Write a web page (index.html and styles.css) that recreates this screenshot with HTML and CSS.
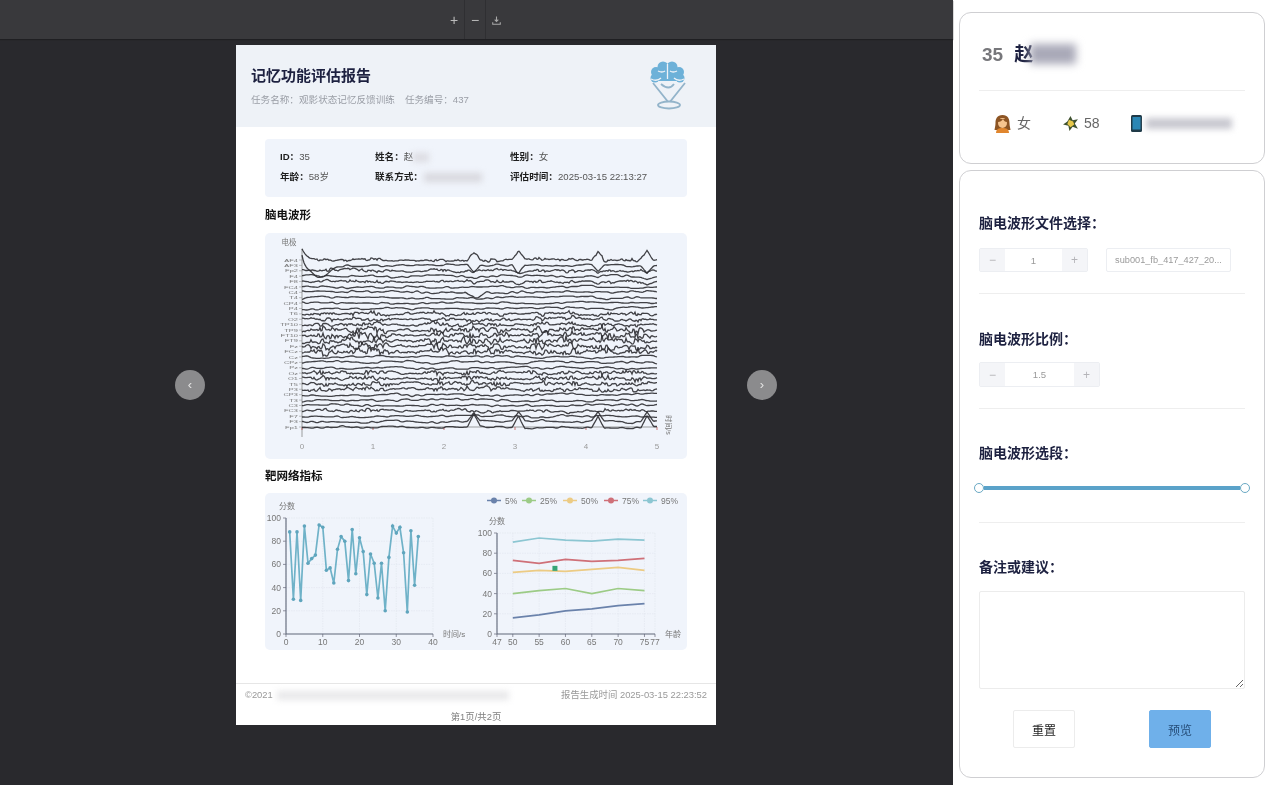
FILE: index.html
```html
<!DOCTYPE html>
<html lang="zh-CN">
<head>
    <meta charset="UTF-8">
    <title>记忆功能评估报告</title>
    <link rel="stylesheet" href="styles.css">
</head>
<body>
    <div class="viewer">
        <div class="toolbar">
            <button class="tool">+</button>
            <button class="tool">−</button>
            <button class="tool">
                <svg width="9" height="9" viewBox="0 0 10 10" fill="none" stroke="#a8a8a8" stroke-width="1.2"><path d="M5 .5v5.5M3 4l2 2 2-2M.8 7v2.2h8.4V7"/></svg>
            </button>
        </div>
        <div class="stage">
            <button class="nav-btn">‹</button>
            <div class="sheet">
                <div class="sheet-header">
                    <div>
                        <h1>记忆功能评估报告</h1>
                        <p class="task-line"><span>任务名称：观影状态记忆反馈训练</span><span>任务编号：437</span></p>
                    </div>
                    <svg class="logo" width="40" height="50" viewBox="0 0 40 50">
                        <path d="M3 23L19 43 35 23" fill="none" stroke="#93b4ca" stroke-width="1.800"/>
                        <ellipse cx="19" cy="45" rx="11" ry="3.500" fill="#eef2f7" stroke="#93b4ca" stroke-width="1.800"/>
                        <path d="M11 24q8 7 13 0" fill="none" stroke="#93b4ca" stroke-width="1.800"/>
                        <circle cx="13" cy="7" r="5.500" fill="#6db1d8"/>
                        <circle cx="22" cy="7" r="5.500" fill="#6db1d8"/>
                        <circle cx="6" cy="12" r="5" fill="#6db1d8"/>
                        <circle cx="29" cy="12" r="5" fill="#6db1d8"/>
                        <circle cx="5" cy="18" r="4.500" fill="#6db1d8"/>
                        <circle cx="30" cy="18" r="4.500" fill="#6db1d8"/>
                        <rect x="8" y="6" width="19" height="15" fill="#6db1d8"/>
                        <path d="M1 19q6 3 10-1M34 19q-6 3-10-1M17.500 4v15M8 11q4 2 7 0M27 11q-4 2-7 0" fill="none" stroke="#eef2f7" stroke-width="1.300"/>
                    </svg>
                </div>
                <div class="sheet-body">
                    <div class="info-box">
                        <div><b>ID：</b>35</div>
                        <div><b>姓名：</b>赵<i class="mask mask-name"></i></div>
                        <div><b>性别：</b>女</div>
                        <div><b>年龄：</b>58岁</div>
                        <div><b>联系方式：</b><i class="mask mask-phone"></i></div>
                        <div><b>评估时间：</b>2025-03-15 22:13:27</div>
                    </div>
                    <h2>脑电波形</h2>
                    <div class="panel panel-wave" id="wave"></div>
                    <h2>靶网络指标</h2>
                    <div class="panel panel-charts">
                        <div id="chart-time"></div>
                        <div id="chart-age"></div>
                    </div>
                </div>
                <div class="sheet-footer">
                    <div class="footer-row">
                        <span>©2021<i class="mask mask-copy"></i></span>
                        <span>报告生成时间 2025-03-15 22:23:52</span>
                    </div>
                    <div class="page-no">第1页/共2页</div>
                </div>
            </div>
            <button class="nav-btn">›</button>
        </div>
    </div>

    <div class="sidebar">
        <div class="card card-user">
            <div class="user-name"><span class="user-id">35</span>赵<i class="mask mask-user"></i></div>
            <div class="user-meta">
                <span class="meta-item">
                    <svg width="19" height="19" viewBox="0 0 19 19"><path d="M9.500 1C4 1 2.500 5 2.500 9c0 3-1 6-1 7h16c0-1-1-4-1-7 0-4-1.500-8-7-8z" fill="#8d5524"/><path d="M3 19c0-4 3-5 6.500-5s6.500 1 6.500 5z" fill="#e0862e"/><ellipse cx="9.500" cy="9" rx="4.500" ry="5" fill="#f6c48e"/><path d="M5 8c2 0 4-1 5-3 1 2 2 3 4 3V5H5z" fill="#8d5524"/></svg>
                    女
                </span>
                <span class="meta-item meta-age">
                    <svg width="17" height="17" viewBox="0 0 16 16"><path d="M8 1l2 4 5-1-3 4 3 5-5-2-3 4-1-5-5-1 4-3z" fill="#3f5230"/><path d="M6.500 4.500l4 1.500 1 3-3.500 2.500-3-3z" fill="#e8c94a"/></svg>
                    58
                </span>
                <span class="meta-item meta-phone">
                    <svg width="11" height="17" viewBox="0 0 11 17"><rect width="11" height="17" rx="1.500" fill="#1f3a48"/><rect x="1.500" y="2" width="8" height="12.500" fill="#2b87b5"/></svg>
                    <i class="mask mask-tel"></i>
                </span>
            </div>
        </div>
        <div class="card card-form">
            <div class="field field-file">
                <h3>脑电波形文件选择：</h3>
                <div class="controls">
                    <div class="stepper stepper-file"><span class="step">−</span><span class="step-value">1</span><span class="step">+</span></div>
                    <div class="file-select">sub001_fb_417_427_20...</div>
                </div>
            </div>
            <div class="field field-scale">
                <h3>脑电波形比例：</h3>
                <div class="stepper stepper-scale"><span class="step">−</span><span class="step-value">1.5</span><span class="step">+</span></div>
            </div>
            <div class="field field-slider">
                <h3>脑电波形选段：</h3>
                <div class="slider"><span class="handle"></span><span class="track"></span><span class="handle"></span></div>
            </div>
            <div class="field field-last">
                <h3>备注或建议：</h3>
                <textarea class="remark"></textarea>
                <div class="actions">
                    <button class="btn">重置</button>
                    <button class="btn btn-primary">预览</button>
                </div>
            </div>
        </div>
    </div>

    <script src="charts.js"></script>
</body>
</html>
```

FILE: styles.css
```css
* {
    box-sizing: border-box;
}
body {
    margin: 0;
    height: 785px;
    overflow: hidden;
    display: flex;
    font-family: "Liberation Sans", "Noto Sans CJK SC", sans-serif;
    background-color: #fff;
}
h1, h2, h3, p {
    margin: 0;
}
.viewer {
    width: 953px;
    display: flex;
    flex-direction: column;
    background-color: #29292d;
}
.toolbar {
    height: 39px;
    padding-right: 2px;
    display: flex;
    justify-content: center;
    background-color: #39393c;
    box-shadow: 0 1px 1px #1f1f22;
}
.tool {
    width: 21px;
    height: 39px;
    padding: 0;
    border: 0;
    border-right: 1px solid #2f2f32;
    background: none;
    color: #bcbcbc;
    font: 14px "Liberation Sans", sans-serif;
    filter: blur(.5px);
}
.tool:last-child {
    border-right: 0;
}
.stage {
    flex: 1;
    padding: 6px 1px 0 0;
    display: flex;
    justify-content: center;
    align-items: flex-start;
    gap: 31px;
}
.nav-btn {
    width: 30px;
    height: 30px;
    margin-top: 325px;
    padding: 0 0 2px;
    border: 0;
    border-radius: 50%;
    background-color: #8b8b8d;
    color: #e4e4e4;
    font: 13px "Liberation Sans", sans-serif;
    filter: blur(.4px);
}
.sheet {
    width: 480px;
    height: 680px;
    display: flex;
    flex-direction: column;
    background-color: #fff;
    filter: blur(.55px);
}
.sheet-header {
    height: 82px;
    padding: 0 26px 0 15px;
    display: flex;
    justify-content: space-between;
    align-items: center;
    background-color: #eef2f7;
}
.sheet-header h1 {
    font-size: 15px;
    line-height: 20px;
    color: #1d2140;
    margin-bottom: 7px;
}
.task-line {
    font-size: 9.6px;
    line-height: 14px;
    color: #9a9ea6;
    display: flex;
    gap: 10px;
}
.logo {
    margin-top: -2px;
}
.sheet-body {
    padding: 12px 29px 0;
}
.info-box {
    height: 58px;
    padding: 7px 15px 0;
    display: grid;
    grid-template-columns: 95px 135px 1fr;
    grid-auto-rows: 20px;
    align-items: center;
    background-color: #f0f4fb;
    border-radius: 4px;
    font-size: 9.6px;
    color: #555;
}
.info-box b {
    color: #1e1e1e;
}
.sheet-body h2 {
    margin: 10px 0;
    font-size: 11.5px;
    line-height: 16px;
    color: #111;
}
.panel-wave + h2 {
    margin: 9px 0;
}
.panel {
    background-color: #f0f4fb;
    border-radius: 5px;
}
.panel-wave {
    height: 226px;
}
.panel-charts {
    height: 157px;
    display: flex;
}
.sheet-footer {
    margin-top: auto;
    height: 42px;
    padding: 4px 9px 0;
    border-top: 1px solid #e6e6e6;
    font-size: 9.4px;
    color: #999;
}
.footer-row {
    display: flex;
    justify-content: space-between;
    line-height: 14px;
}
.page-no {
    margin-top: 8px;
    line-height: 14px;
    text-align: center;
    color: #808080;
}
.mask {
    display: inline-block;
    vertical-align: middle;
    background-color: #cfcfd6;
    filter: blur(3px);
}
.mask-name {
    width: 16px;
    height: 9px;
    background-color: #dcdce2;
}
.mask-phone {
    width: 58px;
    height: 9px;
    margin-left: 1px;
    background-color: #d8d8de;
}
.mask-copy {
    width: 232px;
    height: 9px;
    margin-left: 4px;
    background-color: #e8e8ea;
}
.sidebar {
    width: 317px;
    padding: 12px 5px 7px 6px;
    display: flex;
    flex-direction: column;
    gap: 6px;
}
.card {
    border: 1px solid #cfcfd2;
    border-radius: 12px;
    background-color: #fff;
    padding: 0 19px;
}
.card-user {
    height: 152px;
}
.user-name {
    height: 78px;
    padding: 30px 0 0 3px;
    border-bottom: 1px solid #eee;
    font-size: 19px;
    line-height: 24px;
    font-weight: bold;
    color: #1d2140;
    filter: blur(.4px);
}
.user-id {
    color: #77777b;
    margin-right: 11px;
}
.mask-user {
    width: 46px;
    height: 20px;
    margin: -4px 0 0 -3px;
    background-color: #a9a9b8;
    filter: blur(4px);
}
.user-meta {
    padding: 23px 0 0 14px;
    display: flex;
    align-items: center;
    font-size: 14px;
    line-height: 19px;
    color: #666;
    filter: blur(.4px);
}
.meta-item {
    display: flex;
    align-items: center;
    gap: 5px;
}
.meta-age {
    margin-left: 31px;
}
.meta-phone {
    margin-left: 31px;
    gap: 4px;
}
.mask-tel {
    width: 86px;
    height: 11px;
    background-color: #c8c8d0;
}
.card-form {
    flex: 1;
    padding-top: 44px;
    filter: blur(.4px);
}
.field {
    border-bottom: 1px solid #eee;
    padding-bottom: 21px;
    margin-bottom: 37px;
}
.field-scale {
    margin-bottom: 36px;
}
.field-slider {
    padding-bottom: 29px;
    margin-bottom: 36px;
}
.field-last {
    border-bottom: 0;
    padding: 0;
    margin: 0;
}
.field h3 {
    font-size: 14px;
    line-height: 16px;
    color: #1d2140;
    margin-bottom: 16px;
}
.field-file h3 {
    margin-bottom: 17px;
}
.controls {
    display: flex;
    gap: 18px;
}
.stepper {
    display: flex;
    border: 1px solid #eceef2;
    border-radius: 2px;
    font-size: 9.6px;
    color: #9a9a9a;
}
.stepper-file {
    width: 109px;
    height: 24px;
}
.stepper-scale {
    width: 121px;
    height: 25px;
    margin-top: -1px;
}
.step {
    width: 25px;
    display: flex;
    align-items: center;
    justify-content: center;
    background-color: #f4f5f8;
    color: #b4b4b8;
    font-size: 12px;
}
.step-value {
    flex: 1;
    display: flex;
    align-items: center;
    justify-content: center;
}
.file-select {
    width: 125px;
    height: 24px;
    border: 1px solid #eceef2;
    border-radius: 2px;
    font-size: 9.2px;
    line-height: 22px;
    text-align: center;
    color: #9a9a9a;
}
.slider {
    margin: 22px -5px 0;
    height: 10px;
    display: flex;
    align-items: center;
}
.handle {
    width: 10px;
    height: 10px;
    border: 1.5px solid #6aa9c4;
    border-radius: 50%;
    background-color: #fff;
}
.track {
    flex: 1;
    height: 4px;
    background-color: #5aa2c9;
}
.remark {
    display: block;
    width: 100%;
    height: 98px;
    border: 1px solid #ececec;
    border-radius: 2px;
}
.actions {
    margin-top: 21px;
    padding: 0 34px;
    display: flex;
    justify-content: space-between;
}
.btn {
    width: 62px;
    height: 38px;
    padding: 0;
    border: 1px solid #ececec;
    border-radius: 2px;
    background-color: #fff;
    color: #1f1f1f;
    font: 12px "Liberation Sans", "Noto Sans CJK SC", sans-serif;
}
.btn-primary {
    border-color: #6fb0ea;
    background-color: #6fb0ea;
    color: #264d78;
}
```

FILE: charts.js
```js
// seeded so the traces come out the same on every load
let seed = 35;
function rnd() {
    seed = (seed * 16807) % 2147483647;
    return seed / 2147483647;
}

function svgOpen(w, h) {
    return `<svg width="${w}" height="${h}" viewBox="0 0 ${w} ${h}" font-family="Liberation Sans, Noto Sans CJK SC, sans-serif">`;
}

function label(x, y, text, anchor, size, color) {
    return `<text x="${x}" y="${y}" text-anchor="${anchor || "middle"}" font-size="${size || 8.5}" fill="${color || "#777"}">${text}</text>`;
}

function makeNoise(step) {
    // value noise: random knots with smooth steps between
    let knots = [];
    for (let i = 0; i < 400 / step + 2; i++) knots.push(rnd() * 2 - 1);
    return x => {
        let p = x / step, i = Math.floor(p), t = p - i;
        t = t * t * (3 - 2 * t);
        return knots[i] * (1 - t) + knots[i + 1] * t;
    };
}

// denser bursts around a few time points, as in the recording
function burstAt(px, c) {
    const spots = [18, 50, 62, 72, 135, 165, 190, 235, 265, 300, 330];
    let v = 0;
    spots.forEach(s => {
        v = Math.max(v, 1.6 - Math.abs(px - s - (c % 3) * 3) / 10);
    });
    return v;
}

function drawWave() {
    const x0 = 37, xw = 355, top = 27, gap = 167 / 31;
    const names = ["Fp1","F3","F7","FC3","C3","T3","CP3","P3","T5","O1","Oz","Pz","CPz","Cz","FCz","Fz","FT9","FT10","TP9","TP10","O2","T6","P4","CP4","T4","C4","FC4","F8","F4","Fp2","AF3","AF4"];
    const peaks = [2.42, 3.05, 4.17, 4.86];
    let html = svgOpen(422, 226);
    html += `<path d="M37 16V204M37 194H392" stroke="#777" stroke-width=".7" fill="none"/>`;
    for (let i = 0; i <= 5; i++) {
        let x = x0 + i * xw / 5;
        html += label(x, 216, i, "middle", 8, "#999");
        html += `<path d="M${x} 194v3" stroke="#b55" stroke-width=".8"/>`;
    }
    html += label(24, 12, "电极", "middle", 7.5);
    html += `<text transform="translate(401 192) rotate(90)" font-size="7" fill="#777" text-anchor="middle">时间/s</text>`;

    for (let c = 0; c < 32; c++) {
        let base = top + c * gap;
        html += `<path d="M34 ${base}h3" stroke="#888" stroke-width=".5"/>`;
        // channel names sit one under the other, squat and wide so the 32 of them fit the axis
        html += `<text transform="translate(33 ${base + 1.6}) scale(1.7 1)" text-anchor="end" font-size="4.4" fill="#777">${names[31 - c]}</text>`;

        const slow = makeNoise(22), mid = makeNoise(5), fast = makeNoise(1.5);
        let busy = 0;
        if (c >= 13 && c <= 17) busy = 2.2;
        else if (c >= 21 && c <= 24) busy = 1.4;
        else if (c >= 10 && c <= 12) busy = 1.1;
        else if (c === 0 || c === 2 || c === 4 || c === 28) busy = .8;

        let d = "";
        for (let px = 0; px <= xw; px += 1) {
            let t = px / xw * 5;
            let y = base + slow(px) * 1.2 + mid(px) * 1;
            y += fast(px) * busy * (.4 + Math.max(0, burstAt(px, c)));

            peaks.forEach(p => {
                let near = Math.max(0, 1 - Math.abs(t - p) / .09);
                if (c === 0 || c >= 30) y -= near * (c === 31 ? 12 : 9);
                else if (c <= 4) y += near * (c === 1 ? 7 : 2);
            });
            if (c === 1) y += 12 * Math.exp(-Math.pow((t - .25) / .16, 2)) - 11 * Math.exp(-t / .03);
            if (c === 0) y -= 9 * Math.exp(-t / .06);
            if (c === 6 && t > 2.3 && t < 2.6) y += 6 * Math.sin((t - 2.3) / .3 * Math.PI);
            d += (px ? "L" : "M") + (x0 + px) + " " + y.toFixed(1);
        }
        html += `<path d="${d}" fill="none" stroke="#2e2e32" stroke-width="1.3" stroke-opacity=".9"/>`;
    }
    document.getElementById("wave").innerHTML = html + "</svg>";
}

function drawAxes(x0, y0, xEnd, yTop, xTicks, toX) {
    let html = "";
    for (let v = 0; v <= 100; v += 20) {
        let y = y0 - (y0 - yTop) * v / 100;
        if (v) html += `<path d="M${x0} ${y}H${xEnd}" stroke="#e2e7ef" stroke-width=".7" stroke-dasharray="1.5 1"/>`;
        html += `<path d="M${x0 - 3} ${y}H${x0}" stroke="#667" stroke-width=".7"/>`;
        html += label(x0 - 5, y + 3, v, "end", 8.5);
    }
    xTicks.forEach(t => {
        let x = toX(t);
        html += `<path d="M${x} ${yTop}V${y0}" stroke="#e2e7ef" stroke-width=".7" stroke-dasharray="1.5 1"/>`;
        html += `<path d="M${x} ${y0}v3" stroke="#667" stroke-width=".7"/>`;
        html += label(x, y0 + 11, t, "middle", 8.5);
    });
    html += `<path d="M${x0} ${yTop}V${y0}H${xEnd}" stroke="#5f6678" stroke-width="1.1" fill="none"/>`;
    return html;
}

function drawTimeChart() {
    const values = [88,30,88,29,93,61,65,68,94,92,55,57,44,73,84,80,46,90,52,83,71,34,69,61,31,61,20,66,93,87,92,70,19,89,42,84];
    const x0 = 21, y0 = 141, yTop = 25, xEnd = 168;
    const toX = t => x0 + t * (xEnd - x0) / 40;
    const toY = v => y0 - (y0 - yTop) * v / 100;
    let html = svgOpen(210, 157);
    html += label(22, 16, "分数", "middle", 8);
    html += drawAxes(x0, y0, xEnd, yTop, [0, 10, 20, 30, 40], toX);
    html += label(178, 144, "时间/s", "start", 8);
    let pts = values.map((v, i) => `${toX(i + 1).toFixed(1)},${toY(v).toFixed(1)}`);
    html += `<polyline points="${pts.join(" ")}" fill="none" stroke="#6fb2c8" stroke-width="1.7"/>`;
    values.forEach((v, i) => {
        html += `<circle cx="${toX(i + 1).toFixed(1)}" cy="${toY(v).toFixed(1)}" r="1.8" fill="#5fa5bd"/>`;
    });
    document.getElementById("chart-time").innerHTML = html + "</svg>";
}

function drawAgeChart() {
    const ages = [50, 55, 60, 65, 70, 75];
    const series = [
        { name: "5%", color: "#6a82ab", data: [16, 19, 23, 25, 28, 30] },
        { name: "25%", color: "#9ccb86", data: [40, 43, 45, 40, 45, 43] },
        { name: "50%", color: "#eccb84", data: [61, 63, 62, 64, 66, 63] },
        { name: "75%", color: "#cf7078", data: [73, 70, 74, 72, 73, 75] },
        { name: "95%", color: "#8cc6d2", data: [91, 95, 93, 92, 94, 93] }
    ];
    const legendX = [12, 47, 88, 129, 168];
    const x0 = 22, y0 = 141, yTop = 40, xEnd = 180;
    const toX = a => x0 + (a - 47) * (xEnd - x0) / 30;
    const toY = v => y0 - (y0 - yTop) * v / 100;
    let html = svgOpen(212, 157);
    html += label(22, 31, "分数", "middle", 8);
    html += drawAxes(x0, y0, xEnd, yTop, [47, 50, 55, 60, 65, 70, 75, 77], toX);
    html += label(190, 144, "年龄", "start", 8);
    series.forEach((s, i) => {
        let lx = legendX[i];
        html += `<path d="M${lx} 7.5h14" stroke="${s.color}" stroke-width="1.5"/><circle cx="${lx + 7}" cy="7.5" r="3" fill="${s.color}"/>`;
        html += label(lx + 18, 10.5, s.name, "start", 8.5);
        let pts = ages.map((a, k) => `${toX(a).toFixed(1)},${toY(s.data[k]).toFixed(1)}`);
        html += `<polyline points="${pts.join(" ")}" fill="none" stroke="${s.color}" stroke-width="1.7"/>`;
    });
    html += `<rect x="${toX(58) - 2.5}" y="${toY(65) - 2.5}" width="5" height="5" fill="#35a476"/>`;
    document.getElementById("chart-age").innerHTML = html + "</svg>";
}

drawWave();
drawTimeChart();
drawAgeChart();
```
